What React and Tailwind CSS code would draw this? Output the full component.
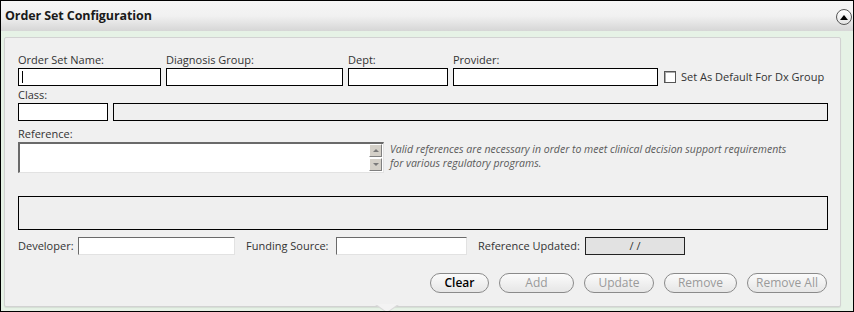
import React from "react";

const font = { fontFamily: '"Open Sans", "DejaVu Sans", sans-serif' };

function Field({ label, w, caret }) {
  return (
    <div className="flex flex-col" style={{ width: w }}>
      <div className="h-[16px] text-[11px] leading-[16px] text-[#333] whitespace-nowrap">{label}</div>
      <div className="h-[18px] border border-black bg-white flex items-center pl-[3px]">
        {caret ? <div className="w-[1px] h-[12px] bg-black" /> : null}
      </div>
    </div>
  );
}

function Btn({ children, active, w }) {
  return (
    <div
      className={`h-[20px] rounded-full border border-[#8a8a8a] bg-gradient-to-b from-[#fbfbfb] to-[#e6e6e6] flex items-center justify-center text-[12px] ${active ? "text-black font-semibold" : "text-[#9a9a9a]"}`}
      style={{ width: w }}
    >
      {children}
    </div>
  );
}

export default function App() {
  return (
    <div className="w-[854px] h-[312px] border border-black bg-[#e6f2e6] flex flex-col relative overflow-hidden" style={font}>
      <div className="h-[30px] shrink-0 bg-gradient-to-b from-[#f6f6f6] via-[#f1f1f1] to-[#d6d6d6] flex items-start justify-between pl-[4px] pr-[1px]">
        <div className="text-[12.5px] font-bold text-[#1a1a1a] mt-[6px] tracking-[-0.1px]">Order Set Configuration</div>
        <div className="mt-[8px] w-[16px] h-[16px] rounded-full border border-[#555] bg-gradient-to-b from-white to-[#e4e4e4] flex items-center justify-center">
          <svg width="8" height="6" viewBox="0 0 8 6"><path d="M0 6 L4 1 L8 6 Z" fill="#000" /></svg>
        </div>
      </div>
      <div className="flex-1 pt-[6px] pl-[3px] pr-[12px] pb-[4px]">
        <div className="h-full rounded-[2px] border border-[#d2d2d2] bg-[#f0f0f0] shadow-[0_1px_1px_rgba(0,0,0,0.08)] pl-[13px] pr-[12px] pt-[14px] flex flex-col">
          <div className="flex items-end">
            <Field label="Order Set Name:" w={143} caret />
            <div className="w-[5px]" />
            <Field label="Diagnosis Group:" w={177} />
            <div className="w-[5px]" />
            <Field label="Dept:" w={100} />
            <div className="w-[5px]" />
            <Field label="Provider:" w={205} />
            <div className="flex items-center h-[18px] ml-[6px]">
              <div className="w-[12px] h-[12px] border border-[#555] bg-white shadow-[inset_1px_1px_0_#aaa]" />
              <span className="ml-[5px] text-[11px] text-[#333] whitespace-nowrap">Set As Default For Dx Group</span>
            </div>
          </div>
          <div className="flex items-end mt-[1px]">
            <Field label="Class:" w={90} />
            <div className="w-[5px]" />
            <div className="flex-1 h-[18px] border border-black bg-[#efefef]" />
          </div>
          <div className="mt-[5px] h-[16px] text-[11px] leading-[16px] text-[#333]">Reference:</div>
          <div className="flex items-start">
            <div className="w-[366px] h-[31px] bg-white border-t-2 border-l-2 border-[#6a6a6a] border-r border-b border-r-[#e2e2e2] border-b-[#e2e2e2] flex justify-end pr-[1px]">
              <div className="flex flex-col gap-[1px]">
                <div className="w-[13px] h-[13px] bg-[#d4d0c8] border border-[#fff] border-r-[#808080] border-b-[#808080] flex items-center justify-center">
                  <svg width="6" height="3" viewBox="0 0 6 3"><path d="M0 3 L3 0 L6 3Z" fill="#7a7a7a" /></svg>
                </div>
                <div className="w-[13px] h-[13px] bg-[#d4d0c8] border border-[#fff] border-r-[#808080] border-b-[#808080] flex items-center justify-center">
                  <svg width="6" height="3" viewBox="0 0 6 3"><path d="M0 0 L3 3 L6 0Z" fill="#7a7a7a" /></svg>
                </div>
              </div>
            </div>
            <div className="ml-[6px] text-[10.5px] leading-[14px] italic text-[#5a5a5a] whitespace-nowrap">
              Valid references are necessary in order to meet clinical decision support requirements
              <br />
              for various regulatory programs.
            </div>
          </div>
          <div className="mt-[23px] h-[34px] border border-black bg-[#efefef]" />
          <div className="mt-[7px] flex items-center h-[18px] text-[11px] text-[#333]">
            <span className="w-[60px] whitespace-nowrap">Developer:</span>
            <div className="w-[157px] h-[18px] bg-white border border-t-[#6a6a6a] border-l-[#6a6a6a] border-r-[#e2e2e2] border-b-[#e2e2e2]" />
            <span className="ml-[11px] w-[90px] whitespace-nowrap">Funding Source:</span>
            <div className="w-[131px] h-[18px] bg-white border border-t-[#6a6a6a] border-l-[#6a6a6a] border-r-[#e2e2e2] border-b-[#e2e2e2]" />
            <span className="ml-[11px] w-[107px] whitespace-nowrap">Reference Updated:</span>
            <div className="w-[100px] h-[18px] bg-[#e2e2e2] border border-[#222] flex items-center justify-center text-[11px] text-[#333]">/ /</div>
          </div>
          <div className="mt-[18px] flex justify-end gap-[10px] pr-[1px]">
            <Btn active w={59}>Clear</Btn>
            <Btn w={75}>Add</Btn>
            <Btn w={70}>Update</Btn>
            <Btn w={73}>Remove</Btn>
            <Btn w={80}>Remove All</Btn>
          </div>
        </div>
      </div>
      <div className="absolute left-[374px] top-[304px] w-0 h-0 border-l-[12px] border-r-[12px] border-t-[8px] border-l-transparent border-r-transparent border-t-[#dadada]" />
      <div className="absolute left-[375px] top-[303px] w-0 h-0 border-l-[11px] border-r-[11px] border-t-[8px] border-l-transparent border-r-transparent border-t-[#f3f3f3]" />
    </div>
  );
}
